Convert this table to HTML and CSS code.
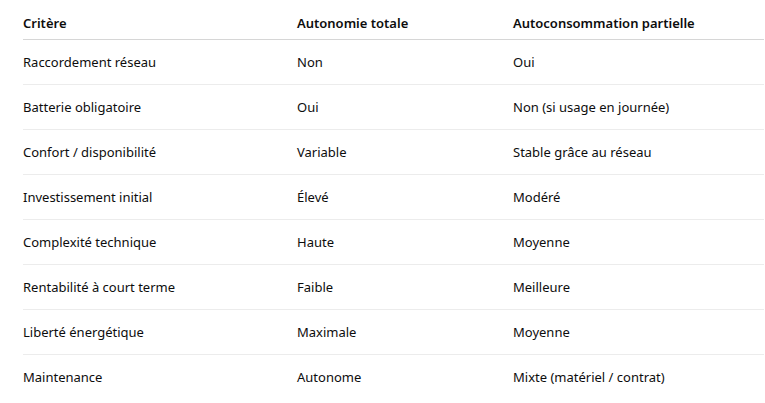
FILE: index.html
```
<!DOCTYPE html>
<html lang="fr">
<head>
<meta charset="utf-8">
<link rel="stylesheet" href="styles.css">
</head>
<body>
<div class="wrap">
<table class="cmp">
<colgroup><col class="c1"><col class="c2"><col class="c3"></colgroup>
<thead>
<tr><th>Critère</th><th>Autonomie totale</th><th>Autoconsommation partielle</th></tr>
</thead>
<tbody>
<tr><td>Raccordement réseau</td><td>Non</td><td>Oui</td></tr>
<tr><td>Batterie obligatoire</td><td>Oui</td><td>Non (si usage en journée)</td></tr>
<tr><td>Confort / disponibilité</td><td>Variable</td><td>Stable grâce au réseau</td></tr>
<tr><td>Investissement initial</td><td>Élevé</td><td>Modéré</td></tr>
<tr><td>Complexité technique</td><td>Haute</td><td>Moyenne</td></tr>
<tr><td>Rentabilité à court terme</td><td>Faible</td><td>Meilleure</td></tr>
<tr><td>Liberté énergétique</td><td>Maximale</td><td>Moyenne</td></tr>
<tr><td>Maintenance</td><td>Autonome</td><td>Mixte (matériel / contrat)</td></tr>
</tbody>
</table>
</div>
</body>
</html>
```
FILE: styles.css
```
html, body { margin: 0; padding: 0; background: #fff; }
body { font-family: "Noto Sans", "Open Sans", sans-serif; color: #0d0d0d; font-size: 13px; }
.wrap { padding: 8px 0 0 23px; }
.cmp { border-collapse: collapse; width: 741px; table-layout: fixed; }
.c1 { width: 274px; }
.c2 { width: 216px; }
.c3 { width: 251px; }
.cmp th { text-align: left; font-weight: 600; line-height: 17px; padding: 7px 0; border-bottom: 1px solid #d6d6d6; }
.cmp td { line-height: 17px; padding: 14px 0 13px; border-bottom: 1px solid #ececec; }
.cmp tbody tr:last-child td { border-bottom: none; }
```
